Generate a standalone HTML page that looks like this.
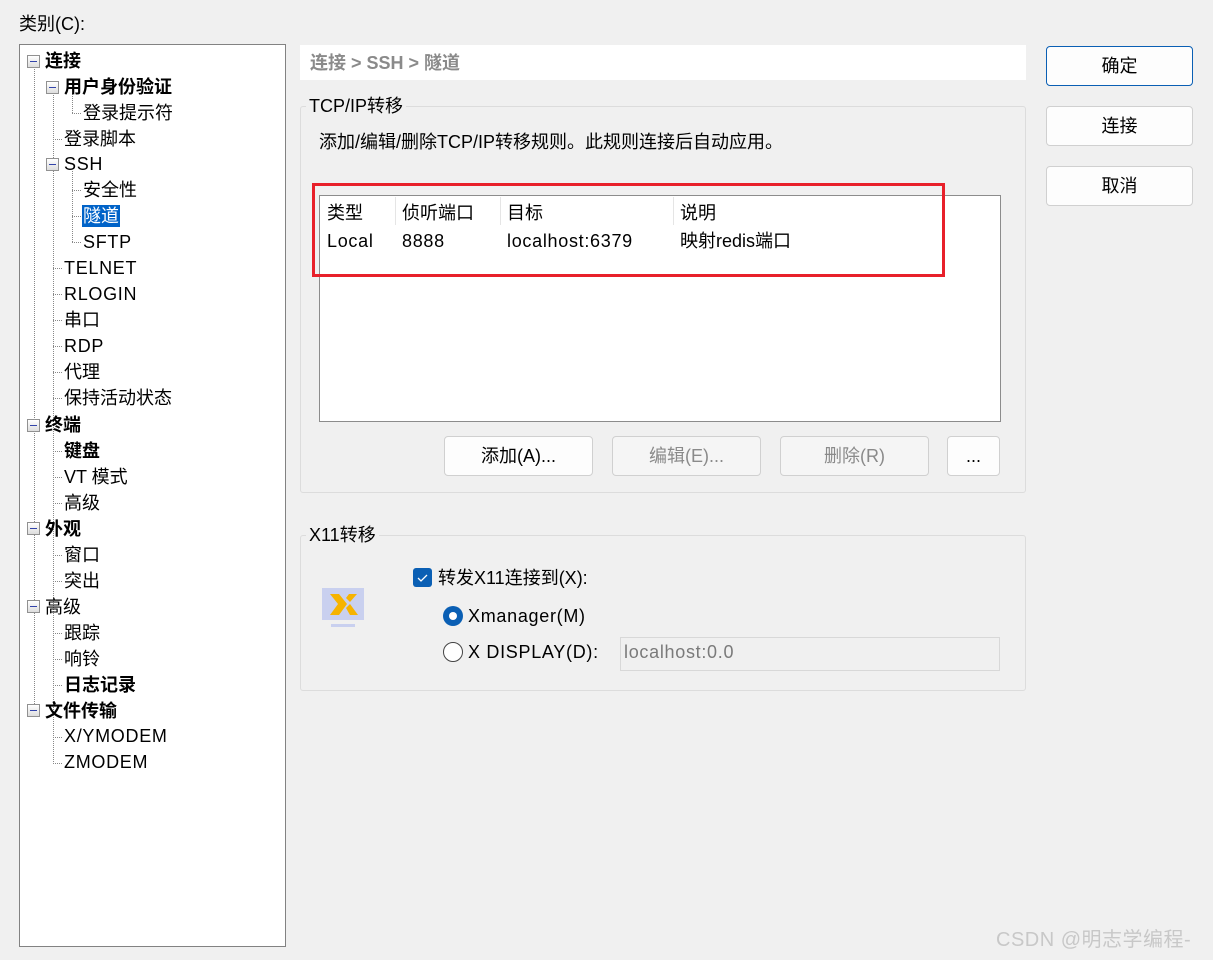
<!DOCTYPE html>
<html><head><meta charset="utf-8"><style>
*{margin:0;padding:0;box-sizing:border-box}
html,body{width:1213px;height:960px;overflow:hidden}
body{background:#f0f0f0;position:relative;font-family:"Liberation Sans","Noto Sans CJK SC",sans-serif;font-size:18px;color:#000}
.a{position:absolute;white-space:nowrap;line-height:22px}
.l{letter-spacing:0.7px}
.b{font-weight:bold}
.tree{position:absolute;left:19px;top:44px;width:267px;height:903px;background:#fff;border:1px solid #828282}
.exp{position:absolute;width:13px;height:13px;border:1px solid #919191;background:linear-gradient(#fff,#ddd)}
.exp:after{content:"";position:absolute;left:2px;top:5px;width:7px;height:1px;background:#3344aa}
.vl{position:absolute;border-left:1px dotted #888}
.hl{position:absolute;border-top:1px dotted #888;width:9px}
.btn{position:absolute;border:1px solid #d0d0d0;background:#fdfdfd;border-radius:4px;text-align:center;line-height:38px;font-size:18px}
.dis{color:#8a8a8a;background:#f5f5f5}
.grp{position:absolute;border:1px solid #dcdcdc;border-radius:3px}
</style></head><body>
<div class="a" style="left:19px;top:13px">类别(C):</div>
<div class="tree"></div>
<div class="vl" style="left:34px;top:67px;height:643px"></div>
<div class="vl" style="left:53px;top:93px;height:669px"></div>
<div class="vl" style="left:72px;top:93px;height:20px"></div>
<div class="vl" style="left:72px;top:171px;height:71px"></div>
<div class="hl" style="left:72px;top:113px"></div>
<div class="hl" style="left:72px;top:190px"></div>
<div class="hl" style="left:72px;top:216px"></div>
<div class="hl" style="left:72px;top:242px"></div>
<div class="hl" style="left:53px;top:139px"></div>
<div class="hl" style="left:53px;top:268px"></div><div class="hl" style="left:53px;top:294px"></div>
<div class="hl" style="left:53px;top:320px"></div><div class="hl" style="left:53px;top:346px"></div>
<div class="hl" style="left:53px;top:372px"></div><div class="hl" style="left:53px;top:398px"></div>
<div class="hl" style="left:53px;top:451px"></div><div class="hl" style="left:53px;top:477px"></div><div class="hl" style="left:53px;top:503px"></div>
<div class="hl" style="left:53px;top:555px"></div><div class="hl" style="left:53px;top:581px"></div>
<div class="hl" style="left:53px;top:633px"></div><div class="hl" style="left:53px;top:659px"></div><div class="hl" style="left:53px;top:685px"></div>
<div class="hl" style="left:53px;top:737px"></div><div class="hl" style="left:53px;top:763px"></div>
<div class="exp" style="left:27px;top:55px"></div>
<div class="exp" style="left:46px;top:81px"></div>
<div class="exp" style="left:46px;top:158px"></div>
<div class="exp" style="left:27px;top:419px"></div>
<div class="exp" style="left:27px;top:522px"></div>
<div class="exp" style="left:27px;top:600px"></div>
<div class="exp" style="left:27px;top:704px"></div>
<div class="a b" style="left:45px;top:50px">连接</div>
<div class="a b" style="left:64px;top:76px">用户身份验证</div>
<div class="a" style="left:83px;top:102px">登录提示符</div>
<div class="a" style="left:64px;top:128px">登录脚本</div>
<div class="a l" style="left:64px;top:153px">SSH</div>
<div class="a" style="left:83px;top:179px">安全性</div>
<div class="a" style="left:82px;top:205px;background:#0063c8;color:#fff;padding:0 1px">隧道</div>
<div class="a l" style="left:83px;top:231px">SFTP</div>
<div class="a l" style="left:64px;top:257px">TELNET</div>
<div class="a l" style="left:64px;top:283px">RLOGIN</div>
<div class="a" style="left:64px;top:309px">串口</div>
<div class="a l" style="left:64px;top:335px">RDP</div>
<div class="a" style="left:64px;top:361px">代理</div>
<div class="a" style="left:64px;top:387px">保持活动状态</div>
<div class="a b" style="left:45px;top:414px">终端</div>
<div class="a b" style="left:64px;top:440px">键盘</div>
<div class="a" style="left:64px;top:466px">VT 模式</div>
<div class="a" style="left:64px;top:492px">高级</div>
<div class="a b" style="left:45px;top:518px">外观</div>
<div class="a" style="left:64px;top:544px">窗口</div>
<div class="a" style="left:64px;top:570px">突出</div>
<div class="a" style="left:45px;top:596px">高级</div>
<div class="a" style="left:64px;top:622px">跟踪</div>
<div class="a" style="left:64px;top:648px">响铃</div>
<div class="a b" style="left:64px;top:674px">日志记录</div>
<div class="a b" style="left:45px;top:700px">文件传输</div>
<div class="a l" style="left:64px;top:725px">X/YMODEM</div>
<div class="a l" style="left:64px;top:751px">ZMODEM</div>

<div style="position:absolute;left:300px;top:45px;width:726px;height:35px;background:#fff"></div>
<div class="a b" style="left:310px;top:52px;color:#8a8a8a">连接 &gt; SSH &gt; 隧道</div>

<div class="grp" style="left:300px;top:106px;width:726px;height:387px"></div>
<div class="a" style="left:306px;top:95px;background:#f0f0f0;padding:0 3px">TCP/IP转移</div>
<div class="a" style="left:319px;top:131px">添加/编辑/删除TCP/IP转移规则。此规则连接后自动应用。</div>
<div style="position:absolute;left:319px;top:195px;width:682px;height:227px;background:#fff;border:1px solid #8c8c8c"></div>
<div style="position:absolute;left:395px;top:197px;width:1px;height:28px;background:#e5e5e5"></div>
<div style="position:absolute;left:500px;top:197px;width:1px;height:28px;background:#e5e5e5"></div>
<div style="position:absolute;left:673px;top:197px;width:1px;height:28px;background:#e5e5e5"></div>
<div class="a" style="left:327px;top:202px">类型</div>
<div class="a" style="left:402px;top:202px">侦听端口</div>
<div class="a" style="left:507px;top:202px">目标</div>
<div class="a" style="left:680px;top:202px">说明</div>
<div class="a l" style="left:327px;top:230px">Local</div>
<div class="a l" style="left:402px;top:230px">8888</div>
<div class="a l" style="left:507px;top:230px">localhost:6379</div>
<div class="a" style="left:680px;top:230px">映射redis端口</div>
<div style="position:absolute;left:312px;top:183px;width:633px;height:94px;border:3px solid #e8202a"></div>
<div class="btn" style="left:444px;top:436px;width:149px;height:40px">添加(A)...</div>
<div class="btn dis" style="left:612px;top:436px;width:149px;height:40px">编辑(E)...</div>
<div class="btn dis" style="left:780px;top:436px;width:149px;height:40px">删除(R)</div>
<div class="btn" style="left:947px;top:436px;width:53px;height:40px">...</div>

<div class="grp" style="left:300px;top:535px;width:726px;height:156px"></div>
<div class="a" style="left:306px;top:524px;background:#f0f0f0;padding:0 3px">X11转移</div>
<div style="position:absolute;left:322px;top:588px;width:42px;height:32px;background:#c9d0ef"></div>
<div style="position:absolute;left:331px;top:624px;width:24px;height:3px;background:#c9d0ef"></div>
<svg style="position:absolute;left:322px;top:588px" width="42" height="32"><path d="M8 6h9l8 10-8 11H8l8-11z" fill="#f6b300"/><path d="M27 6h8l-7 8-4-4z M24 20l4-4 8 11h-8z" fill="#f6b300"/></svg>
<div style="position:absolute;left:413px;top:568px;width:19px;height:19px;background:#0a5fb4;border-radius:3px"></div>
<svg style="position:absolute;left:413px;top:568px" width="19" height="19"><path d="M5 10l3 3 6-6" stroke="#fff" stroke-width="1.3" fill="none"/></svg>
<div class="a" style="left:438px;top:567px">转发X11连接到(X):</div>
<div style="position:absolute;left:443px;top:606px;width:20px;height:20px;border-radius:50%;background:#0a5fb4"></div>
<div style="position:absolute;left:449px;top:612px;width:8px;height:8px;border-radius:50%;background:#fff"></div>
<div class="a l" style="left:468px;top:605px">Xmanager(M)</div>
<div style="position:absolute;left:443px;top:642px;width:20px;height:20px;border-radius:50%;border:1px solid #444;background:#fff"></div>
<div class="a l" style="left:468px;top:641px">X DISPLAY(D):</div>
<div style="position:absolute;left:620px;top:637px;width:380px;height:34px;border:1px solid #d8d8d8;background:#f0f0f0"></div>
<div class="a l" style="left:624px;top:641px;color:#7a7a7a">localhost:0.0</div>

<div class="btn" style="left:1046px;top:46px;width:147px;height:40px;border:1px solid #0a5fb4">确定</div>
<div class="btn" style="left:1046px;top:106px;width:147px;height:40px">连接</div>
<div class="btn" style="left:1046px;top:166px;width:147px;height:40px">取消</div>
<div class="a" style="left:996px;top:929px;font-size:20px;letter-spacing:0.5px;color:#c8c8c8">CSDN @明志学编程-</div>
</body></html>
